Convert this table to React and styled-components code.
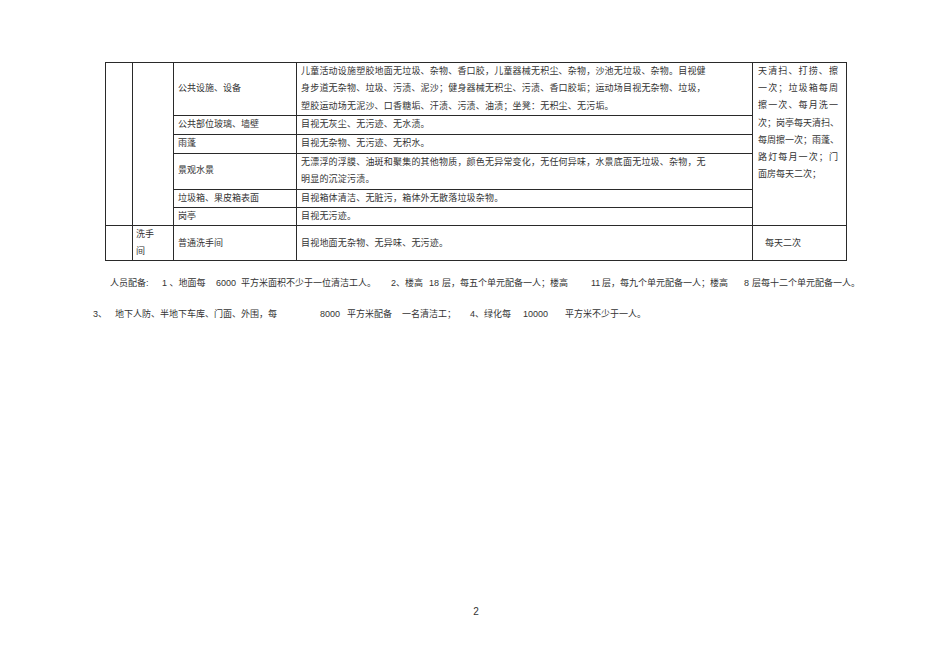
import React from 'react'
import styled, { createGlobalStyle } from 'styled-components'

const GlobalStyle = createGlobalStyle`
    html, body {
        margin: 0;
        padding: 0;
        background: #ffffff;
    }
    body {
        font-family: 'Liberation Sans', 'Noto Sans CJK SC', sans-serif;
        color: #333333;
    }
`

const rows = [
    {
        name: '公共设施、设备',
        h: 53,
        desc: [
            '儿童活动设施塑胶地面无垃圾、杂物、香口胶，儿童器械无积尘、杂物，沙池无垃圾、杂物。目视健',
            '身步道无杂物、垃圾、污渍、泥沙；健身器械无积尘、污渍、香口胶垢；运动场目视无杂物、垃圾，',
            '塑胶运动场无泥沙、口香糖垢、汗渍、污渍、油渍；坐凳：无积尘、无污垢。',
        ],
    },
    { name: '公共部位玻璃、墙壁', h: 18, desc: ['目视无灰尘、无污迹、无水渍。'] },
    { name: '雨蓬', h: 19, desc: ['目视无杂物、无污迹、无积水。'] },
    {
        name: '景观水景',
        h: 36,
        desc: [
            '无漂浮的浮膜、油斑和聚集的其他物质，颜色无异常变化，无任何异味，水景底面无垃圾、杂物，无',
            '明显的沉淀污渍。',
        ],
    },
    { name: '垃圾箱、果皮箱表面', h: 17, desc: ['目视箱体清洁、无脏污，箱体外无散落垃圾杂物。'] },
    { name: '岗亭', h: 18, desc: ['目视无污迹。'] },
]

const freq = [
    '天清扫、打捞、擦',
    '一次；垃圾箱每周',
    '擦一次、每月洗一',
    '次；岗亭每天清扫、',
    '每周擦一次；雨蓬、',
    '路灯每月一次；门',
    '面房每天二次；',
]

const note1 = [
    ['人员配备:', 52],
    ['1 、地面每', 54],
    ['6000', 25],
    ['平方米面积不少于一位清洁工人。', 150],
    ['2、楼高', 38],
    ['18', 13],
    ['层，每五个单元配备一人；楼高', 149],
    ['11', 11],
    ['层，每九个单元配备一人；楼高', 142],
    ['8', 8],
    ['层每十二个单元配备一人。', 0],
]

const note2 = [
    ['3、', 22],
    ['地下人防、半地下车库、门面、外围，每', 205],
    ['8000', 27],
    ['平方米配备', 55],
    ['一名清洁工；', 68],
    ['4、绿化每', 53],
    ['10000', 42],
    ['平方米不少于一人。', 0],
]

const App = () => {
    return (
        <Page>
            <GlobalStyle />
            <Table>
                <colgroup>
                    <Col $w={27} />
                    <Col $w={41} />
                    <Col $w={123} />
                    <Col $w={456} />
                    <Col $w={94} />
                </colgroup>
                <tbody>
                    {rows.map((row, i) => (
                        <Row key={row.name} $h={row.h}>
                            {i === 0 && <Cell rowSpan={6} />}
                            {i === 0 && <Cell rowSpan={6} />}
                            <Cell>{row.name}</Cell>
                            <DescCell>
                                {row.desc.map((line) => (
                                    <Line key={line}>{line}</Line>
                                ))}
                            </DescCell>
                            {i === 0 && (
                                <FreqCell rowSpan={6}>
                                    {freq.map((line, j) => (
                                        <FreqLine key={line} $last={j === freq.length - 1}>{line}</FreqLine>
                                    ))}
                                </FreqCell>
                            )}
                        </Row>
                    ))}
                    <Row $h={35}>
                        <Cell />
                        <NarrowCell>
                            <Line>洗手</Line>
                            <Line>间</Line>
                        </NarrowCell>
                        <Cell>普通洗手间</Cell>
                        <DescCell $middle>目视地面无杂物、无异味、无污迹。</DescCell>
                        <Cell $indent>每天二次</Cell>
                    </Row>
                </tbody>
            </Table>

            <Notes>
                <NoteLine $left={110}>
                    {note1.map(([text, w]) => (
                        <Seg key={text} $w={w}>{text}</Seg>
                    ))}
                </NoteLine>
                <NoteLine $left={93}>
                    {note2.map(([text, w]) => (
                        <Seg key={text} $w={w}>{text}</Seg>
                    ))}
                </NoteLine>
            </Notes>

            <PageNum>2</PageNum>
        </Page>
    )
}

const Page = styled.div`
    width: 950px;
    height: 672px;
    display: flex;
    flex-direction: column;
    background: #ffffff;
    overflow: hidden;
`

const Table = styled.table`
    margin: 62px 0 0 105px;
    width: 742px;
    table-layout: fixed;
    border-collapse: collapse;
    font-size: 9px;
    color: #333333;
`

const Col = styled.col`
    width: ${(p) => p.$w}px;
`

const Row = styled.tr`
    height: ${(p) => p.$h}px;
`

const Cell = styled.td`
    border: 1px solid #2a2a2a;
    padding: 0 4px;
    padding-left: ${(p) => (p.$indent ? '12px' : '4px')};
    line-height: 17.4px;
    vertical-align: middle;
    white-space: nowrap;
`

const DescCell = styled(Cell)`
    vertical-align: ${(p) => (p.$middle ? 'middle' : 'top')};
    letter-spacing: 0.2px;
`

const NarrowCell = styled(Cell)`
    padding-left: 3px;
    line-height: 17px;
`

const FreqCell = styled(Cell)`
    vertical-align: top;
    padding: 0 8px 0 5px;
    line-height: 17.2px;
`

const Line = styled.div``

const FreqLine = styled.div`
    text-align: justify;
    text-align-last: ${(p) => (p.$last ? 'left' : 'justify')};
`

const Notes = styled.div`
    margin-top: 12px;
    display: flex;
    flex-direction: column;
`

const NoteLine = styled.div`
    display: flex;
    align-items: baseline;
    height: 30.5px;
    line-height: 20px;
    padding-left: ${(p) => p.$left}px;
    font-size: 9px;
    color: #333333;
    white-space: nowrap;
`

const Seg = styled.span`
    flex: none;
    width: ${(p) => (p.$w ? `${p.$w}px` : 'auto')};
`

const PageNum = styled.div`
    margin-top: auto;
    margin-bottom: 54px;
    text-align: center;
    font-size: 10px;
    line-height: 12px;
    padding-left: 2px;
    color: #333333;
`

export default App
